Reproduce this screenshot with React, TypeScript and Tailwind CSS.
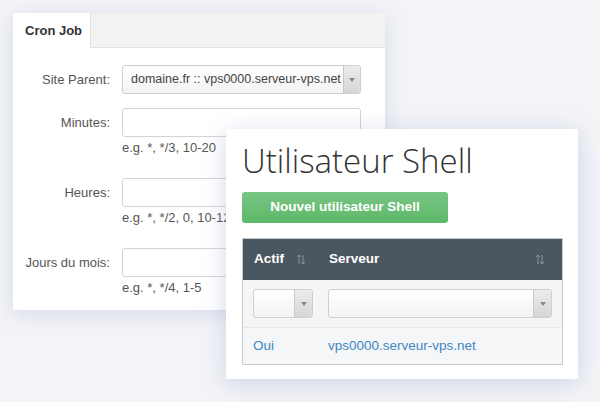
import React from "react";

type FieldProps = {
  label: string;
  help?: string;
  children: React.ReactNode;
};

function Field({ label, help, children }: FieldProps) {
  return (
    <div className="flex items-start">
      <div className="w-[97px] shrink-0 text-right text-[13px] leading-[29px] text-[#555]">{label}</div>
      <div className="ml-[12px] w-[239px]">
        {children}
        {help && <div className="mt-[3px] text-[13px] leading-[16px] text-[#555]">{help}</div>}
      </div>
    </div>
  );
}

function Arrow({ className = "" }: { className?: string }) {
  return (
    <div
      className={`flex items-center justify-center border-l border-[#c9c9c9] bg-gradient-to-b from-[#ececec] to-[#d6d6d6] ${className}`}
    >
      <svg width="6" height="4" viewBox="0 0 6 4">
        <path d="M0 0 L6 0 L3 4 Z" fill="#888" />
      </svg>
    </div>
  );
}

function Select({ value, className = "", arrowW = "w-[17px]" }: { value?: string; className?: string; arrowW?: string }) {
  return (
    <div
      className={`flex h-[29px] overflow-hidden rounded-[3px] border border-[#cfcfcf] bg-gradient-to-b from-white to-[#f3f3f3] ${className}`}
    >
      <div className="flex-1 whitespace-nowrap pl-[8px] text-[12.5px] leading-[27px] text-[#444]">{value}</div>
      <Arrow className={arrowW} />
    </div>
  );
}

function Input() {
  return <div className="h-[29px] w-full rounded-[3px] border border-[#d4d4d4] bg-white" />;
}

function SortIcon() {
  return (
    <svg width="10" height="11" viewBox="0 0 10 11" className="shrink-0">
      <path d="M3 10 V1 M1 3 L3 1 L5 3" stroke="#8a949b" strokeWidth="1" fill="none" />
      <path d="M7 1 V10 M5 8 L7 10 L9 8" stroke="#8a949b" strokeWidth="1" fill="none" />
    </svg>
  );
}

export default function App() {
  return (
    <div
      className="relative h-[402px] w-[600px] overflow-hidden bg-[#f3f4f7]"
      style={{ fontFamily: '"Liberation Sans", Arial, sans-serif' }}
    >
      {/* carte Cron Job */}
      <div className="ml-[13px] mt-[13px] h-[297px] w-[372px] bg-white shadow-[0_4px_18px_rgba(160,170,210,0.35)]">
        <div className="flex h-[35px] border-b border-[#e2e2e2] bg-[#f2f2f3]">
          <div className="-mb-px w-[78px] border-r border-[#e2e2e2] bg-white pl-[12px] text-[13px] font-bold leading-[35px] text-[#333]">
            Cron Job
          </div>
        </div>
        <div className="flex flex-col pt-[17px]">
          <Field label="Site Parent:">
            <Select value="domaine.fr :: vps0000.serveur-vps.net" />
          </Field>
          <div className="mt-[14px] flex flex-col gap-[22px]">
            <Field label="Minutes:" help="e.g. *, */3, 10-20">
              <Input />
            </Field>
            <Field label="Heures:" help="e.g. *, */2, 0, 10-12">
              <Input />
            </Field>
            <Field label="Jours du mois:" help="e.g. *, */4, 1-5">
              <Input />
            </Field>
          </div>
        </div>
      </div>

      {/* carte Utilisateur Shell, posée par-dessus */}
      <div className="absolute left-[226px] top-[129px] h-[250px] w-[352px] bg-white px-[16px] pt-[12px] shadow-[0_4px_22px_rgba(150,160,205,0.4)]">
        <h1
          className="text-[33px] font-light leading-[40px] text-[#333]"
          style={{ fontFamily: '"Open Sans", sans-serif' }}
        >
          Utilisateur Shell
        </h1>
        <div className="mt-[11px] flex h-[31px] w-[206px] items-center justify-center rounded-[3px] bg-gradient-to-b from-[#79c585] to-[#5db868] text-[13.5px] font-bold text-white">
          Nouvel utilisateur Shell
        </div>
        <div className="mt-[15px] w-[321px] border border-[#c8cbcd]">
          <div className="flex h-[41px] items-center bg-[#4b5760] text-[13.5px] font-bold text-white">
            <div className="flex w-[86px] items-center pl-[11px]">
              <span className="w-[42px]">Actif</span>
              <SortIcon />
            </div>
            <div className="flex flex-1 items-center pr-[17px]">
              <span className="flex-1">Serveur</span>
              <SortIcon />
            </div>
          </div>
          <div className="flex h-[48px] items-center border-b border-[#e6e7e9] bg-[#f4f5f6] pl-[10px] pr-[10px]">
            <Select className="w-[60px]" arrowW="w-[18px]" />
            <Select className="ml-[15px] flex-1" arrowW="w-[18px]" />
          </div>
          <div className="flex h-[36px] items-center bg-[#f5f6f8] text-[13.5px] text-[#3d87c4]">
            <span className="w-[85px] pl-[10px]">Oui</span>
            <span>vps0000.serveur-vps.net</span>
          </div>
        </div>
      </div>
    </div>
  );
}
